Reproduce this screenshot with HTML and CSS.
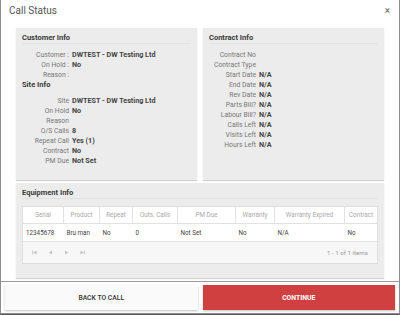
FILE: index.html
```html
<!DOCTYPE html>
<html lang="en">
<head>
    <meta charset="UTF-8">
    <meta name="viewport" content="width=device-width, initial-scale=1.0">
    <title>Call Status</title>
    <link rel="stylesheet" href="styles.css">
</head>
<body>
    <div class="dialog">
        <div class="dialog-header">
            <span class="dialog-title">Call Status</span>
            <span class="dialog-close">&times;</span>
        </div>

        <div class="dialog-body">
            <div class="info-row">
                <div class="panel">
                    <div class="panel-title">Customer Info</div>
                    <div class="fields">
                        <div class="field"><span class="label">Customer :</span><span class="value">DWTEST - DW Testing Ltd</span></div>
                        <div class="field"><span class="label">On Hold :</span><span class="value">No</span></div>
                        <div class="field"><span class="label">Reason :</span><span class="value"></span></div>
                    </div>
                    <div class="sub-title">Site Info</div>
                    <div class="fields">
                        <div class="field"><span class="label">Site</span><span class="value">DWTEST - DW Testing Ltd</span></div>
                        <div class="field"><span class="label">On Hold</span><span class="value">No</span></div>
                        <div class="field"><span class="label">Reason</span><span class="value"></span></div>
                        <div class="field"><span class="label">O/S Calls</span><span class="value">8</span></div>
                        <div class="field"><span class="label">Repeat Call</span><span class="value">Yes (1)</span></div>
                        <div class="field"><span class="label">Contract</span><span class="value">No</span></div>
                        <div class="field"><span class="label">PM Due</span><span class="value">Not Set</span></div>
                    </div>
                </div>

                <div class="panel">
                    <div class="panel-title">Contract Info</div>
                    <div class="fields">
                        <div class="field"><span class="label">Contract No</span><span class="value"></span></div>
                        <div class="field"><span class="label">Contract Type</span><span class="value"></span></div>
                        <div class="field"><span class="label">Start Date</span><span class="value">N/A</span></div>
                        <div class="field"><span class="label">End Date</span><span class="value">N/A</span></div>
                        <div class="field"><span class="label">Rev Date</span><span class="value">N/A</span></div>
                        <div class="field"><span class="label">Parts Bill?</span><span class="value">N/A</span></div>
                        <div class="field"><span class="label">Labour Bill?</span><span class="value">N/A</span></div>
                        <div class="field"><span class="label">Calls Left</span><span class="value">N/A</span></div>
                        <div class="field"><span class="label">Visits Left</span><span class="value">N/A</span></div>
                        <div class="field"><span class="label">Hours Left</span><span class="value">N/A</span></div>
                    </div>
                </div>
            </div>

            <div class="panel equipment">
                <div class="panel-title">Equipment Info</div>
                <div class="grid">
                    <table>
                        <thead>
                            <tr>
                                <th class="col-serial">Serial</th>
                                <th class="col-product">Product</th>
                                <th class="col-repeat">Repeat</th>
                                <th class="col-outs">Outs. Calls</th>
                                <th class="col-pm">PM Due</th>
                                <th class="col-warranty">Warranty</th>
                                <th class="col-expired">Warranty Expired</th>
                                <th>Contract</th>
                            </tr>
                        </thead>
                        <tbody>
                            <tr>
                                <td>12345678</td>
                                <td>Bru man</td>
                                <td>No</td>
                                <td>0</td>
                                <td>Not Set</td>
                                <td>No</td>
                                <td>N/A</td>
                                <td>No</td>
                            </tr>
                        </tbody>
                    </table>
                    <div class="pager">
                        <div class="pager-nav">
                            <svg width="5" height="5" viewBox="0 0 5 5"><rect x="0" y="0.5" width="0.8" height="4" fill="#c4c4c4"/><path d="M4.5 0.5 L1.3 2.5 L4.5 4.5 Z" fill="#c4c4c4"/></svg>
                            <svg width="5" height="5" viewBox="0 0 5 5"><path d="M4 0.5 L0.8 2.5 L4 4.5 Z" fill="#c4c4c4"/></svg>
                            <svg width="5" height="5" viewBox="0 0 5 5"><path d="M1 0.5 L4.2 2.5 L1 4.5 Z" fill="#c4c4c4"/></svg>
                            <svg width="5" height="5" viewBox="0 0 5 5"><path d="M0.5 0.5 L3.7 2.5 L0.5 4.5 Z" fill="#c4c4c4"/><rect x="4.2" y="0.5" width="0.8" height="4" fill="#c4c4c4"/></svg>
                        </div>
                        <span class="pager-info">1 - 1 of 1 items</span>
                    </div>
                </div>
            </div>
        </div>

        <div class="dialog-footer">
            <button class="btn">BACK TO CALL</button>
            <button class="btn btn-primary">CONTINUE</button>
        </div>
    </div>
</body>
</html>
```

FILE: styles.css
```css
body {
    margin: 0;
    background: #5a5a5a;
    font-family: Roboto, "Liberation Sans", sans-serif;
}
.dialog {
    width: 400px;
    height: 314px;
    box-sizing: border-box;
    background: white;
    border: 1px solid #8c8c8c;
    border-top: none;
    display: flex;
    flex-direction: column;
}
.dialog-header {
    height: 28px;
    display: flex;
    justify-content: space-between;
    padding: 5px 9px 0 8px;
    box-sizing: border-box;
}
.dialog-title {
    font-size: 10px;
    line-height: 12px;
    color: #555;
}
.dialog-close {
    font-size: 10px;
    line-height: 12px;
    color: #666;
}
.dialog-body {
    padding: 0 15px;
}
.info-row {
    display: grid;
    grid-template-columns: 1fr 1fr;
    gap: 6px;
    margin-bottom: 3px;
}
.panel {
    background: #ececec;
    padding: 0 6px;
    height: 152px;
    box-sizing: border-box;
    box-shadow: 0 1px 1px rgba(0, 0, 0, 0.18);
}
.panel-title {
    font-size: 7.5px;
    font-weight: bold;
    color: #3a3a3a;
    line-height: 10px;
    padding-top: 5px;
    border-bottom: 1px solid #e2e2e2;
    margin-bottom: 6px;
}
.sub-title {
    font-size: 7.5px;
    font-weight: bold;
    color: #3a3a3a;
    line-height: 10px;
    margin-bottom: 6px;
}
.field {
    display: grid;
    grid-template-columns: 47px 1fr;
    gap: 3px;
    height: 10px;
    line-height: 10px;
    font-size: 6.8px;
}
.label {
    text-align: right;
    color: #777;
    white-space: nowrap;
}
.value {
    color: #444;
    font-weight: bold;
    font-size: 7.2px;
    white-space: nowrap;
}
.equipment {
    height: 95px;
}
.equipment .panel-title {
    margin-bottom: 7px;
}
.grid {
    background: white;
    border: 1px solid #dedede;
}
table {
    width: 100%;
    border-collapse: collapse;
    table-layout: fixed;
    font-size: 6.3px;
}
.col-serial { width: 40px; }
.col-product { width: 35px; }
.col-repeat { width: 32px; }
.col-outs { width: 44px; }
.col-pm { width: 57px; }
.col-warranty { width: 38px; }
.col-expired { width: 69px; }
th {
    height: 16px;
    font-weight: normal;
    color: #a8a8a8;
    text-align: center;
    border-left: 1px solid #e2e2e2;
    border-bottom: 1px solid #e2e2e2;
    padding: 0;
    white-space: nowrap;
}
th:first-child {
    border-left: none;
}
td {
    height: 17px;
    color: #444;
    padding: 0 0 0 3px;
    border-bottom: 1px solid #e2e2e2;
    white-space: nowrap;
}
.pager {
    height: 21px;
    background: #f7f7f7;
    display: flex;
    align-items: center;
    justify-content: space-between;
    padding: 0 9px 0 9px;
}
.pager-nav {
    display: flex;
    gap: 11px;
}
.pager-info {
    font-size: 6.2px;
    color: #999;
}
.dialog-footer {
    margin-top: auto;
    border-top: 1px solid #9a9a9a;
    padding: 3px 4px 3px 4px;
    display: flex;
    gap: 5px;
}
.btn {
    flex: 1;
    height: 25px;
    border: none;
    background: #fafafa;
    color: #333;
    font-family: Roboto, "Liberation Sans", sans-serif;
    font-size: 6.8px;
    font-weight: 500;
    box-shadow: 0 1px 2px rgba(0, 0, 0, 0.25);
    padding: 0;
}
.btn-primary {
    background: #d04040;
    color: white;
    font-weight: bold;
}
```
